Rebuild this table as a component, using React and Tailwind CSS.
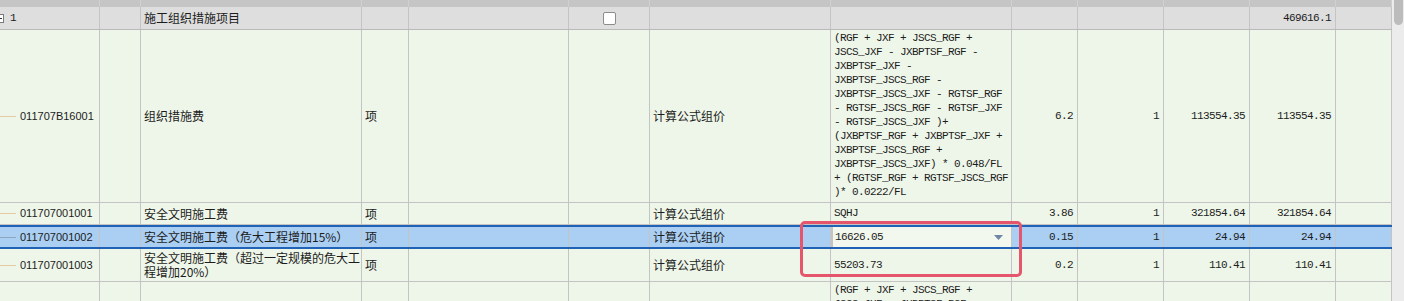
import React from 'react';

// column widths, left to right (grid lines at 100, 141, 362, 409, 569, 650, 831, 1012, 1078, 1164, 1250, 1336)
const colW = [
  'w-[100px]', 'w-[41px]', 'w-[221px]', 'w-[47px]', 'w-[160px]', 'w-[81px]', 'w-[181px]',
  'w-[181px]', 'w-[66px]', 'w-[86px]', 'w-[86px]', 'w-[86px]', 'w-[56px]',
];

const cjk = "font-['Noto_Sans_CJK_SC',sans-serif] text-[12px]";
const mono = "font-['Liberation_Mono',monospace] text-[11px] tracking-[-0.6px]";
const sans = "font-['Liberation_Sans',sans-serif] text-[11px]";

const formulaMain = [
  '(RGF + JXF + JSCS_RGF +',
  'JSCS_JXF - JXBPTSF_RGF -',
  'JXBPTSF_JXF -',
  'JXBPTSF_JSCS_RGF -',
  'JXBPTSF_JSCS_JXF - RGTSF_RGF',
  '- RGTSF_JSCS_RGF - RGTSF_JXF',
  '- RGTSF_JSCS_JXF )+',
  '(JXBPTSF_RGF + JXBPTSF_JXF +',
  'JXBPTSF_JSCS_RGF +',
  'JXBPTSF_JSCS_JXF) * 0.048/FL',
  '+ (RGTSF_RGF + RGTSF_JSCS_RGF',
  ')* 0.0222/FL',
];

function Cell({ i, className = '', children }) {
  return (
    <div className={`shrink-0 flex overflow-hidden border-r border-[#c4c4c4] ${colW[i]} ${className}`}>
      {children}
    </div>
  );
}

function TreeCell({ code, selected }) {
  return (
    <Cell i={0} className="items-center">
      <span className={`w-[16px] h-px shrink-0 ${selected ? 'bg-[#8ea6c0]' : 'bg-[#e4cba2]'}`} />
      <span className={`ml-[4px] ${sans}`}>{code}</span>
    </Cell>
  );
}

function Num({ i, children }) {
  return (
    <Cell i={i} className="items-center justify-end pr-[4px]">
      <span className={mono}>{children}</span>
    </Cell>
  );
}

function Text({ i, children, className = '' }) {
  return (
    <Cell i={i} className={`items-center pl-[3px] ${className}`}>
      <span className={`${cjk} leading-[14px]`}>{children}</span>
    </Cell>
  );
}

function Formula({ lines }) {
  return (
    <Cell i={7} className="flex-col items-start pl-[3px] pt-[1px]">
      {lines.map((l, k) => (
        <div key={k} className={`${mono} leading-[14px] whitespace-pre`}>{l}</div>
      ))}
    </Cell>
  );
}

function ItemRow({ code, name, price, rate, total, formula, height, selected }) {
  return (
    <div
      className={`flex shrink-0 ${height} ${
        selected ? 'bg-[#aacff3] border-y-2 border-[#1f62b6]' : 'bg-[#eef6e9] border-b border-[#c4c4c4]'
      }`}
    >
      <TreeCell code={code} selected={selected} />
      <Cell i={1} />
      <Text i={2}>{name}</Text>
      <Text i={3} className="pl-[2px]">项</Text>
      <Cell i={4} />
      <Cell i={5} />
      <Text i={6}>计算公式组价</Text>
      {selected ? (
        <Cell i={7} className="items-center justify-between pl-[2px] pr-[8px] bg-[#f2f8ed] border-x-2 border-[#1f62b6]">
          <span className={mono}>{formula}</span>
          <svg width="9" height="5" viewBox="0 0 9 5">
            <polygon points="0,0 9,0 4.5,5" fill="#6f86a6" />
          </svg>
        </Cell>
      ) : (
        <Cell i={7} className="items-center pl-[3px]">
          <span className={mono}>{formula}</span>
        </Cell>
      )}
      <Num i={8}>{rate}</Num>
      <Num i={9}>1</Num>
      <Num i={10}>{price}</Num>
      <Num i={11}>{total}</Num>
      <Cell i={12} />
    </div>
  );
}

export default function App() {
  return (
    <div className="relative flex h-[301px] w-[1404px] overflow-hidden bg-[#eef6e9] text-[#1c1c1c]">
      <div className="flex-1 flex flex-col min-h-0">
        {/* tail of the header */}
        <div className="flex shrink-0 h-[7px] bg-[#c5c5c5]">
          {colW.map((w, k) => (
            <div key={k} className={`shrink-0 border-r border-[#d0d0d0] ${w}`} />
          ))}
        </div>

        {/* group row */}
        <div className="flex shrink-0 h-[23px] bg-[#dedede] border-b border-[#b9b9b9]">
          <Cell i={0} className="items-center">
            <span className="-ml-[5px] w-[9px] h-[9px] border border-[#7a7a7a] bg-white flex items-center justify-center">
              <span className="w-[5px] h-px bg-[#333]" />
            </span>
            <span className={`ml-[6px] ${mono}`}>1</span>
          </Cell>
          <Cell i={1} />
          <Text i={2}>施工组织措施项目</Text>
          <Cell i={3} />
          <Cell i={4} />
          <Cell i={5} className="items-center justify-center">
            <span className="w-[13px] h-[13px] rounded-[2px] border border-[#8c8c8c] bg-white" />
          </Cell>
          <Cell i={6} />
          <Cell i={7} />
          <Cell i={8} />
          <Cell i={9} />
          <Cell i={10} />
          <Num i={11}>469616.1</Num>
          <Cell i={12} />
        </div>

        {/* 011707B16001 */}
        <div className="flex shrink-0 h-[173px] bg-[#eef6e9] border-b border-[#c4c4c4]">
          <TreeCell code="011707B16001" />
          <Cell i={1} />
          <Text i={2}>组织措施费</Text>
          <Text i={3} className="pl-[2px]">项</Text>
          <Cell i={4} />
          <Cell i={5} />
          <Text i={6}>计算公式组价</Text>
          <Formula lines={formulaMain} />
          <Num i={8}>6.2</Num>
          <Num i={9}>1</Num>
          <Num i={10}>113554.35</Num>
          <Num i={11}>113554.35</Num>
          <Cell i={12} />
        </div>

        <ItemRow height="h-[22px]" code="011707001001" name="安全文明施工费" formula="SQHJ" rate="3.86" price="321854.64" total="321854.64" />
        <ItemRow height="h-[24px]" selected code="011707001002" name="安全文明施工费（危大工程增加15%）" formula="16626.05" rate="0.15" price="24.94" total="24.94" />
        <ItemRow
          height="h-[33px]"
          code="011707001003"
          name={<>安全文明施工费（超过一定规模的危大工<br />程增加20%）</>}
          formula="55203.73"
          rate="0.2"
          price="110.41"
          total="110.41"
        />

        {/* next item, cut off */}
        <div className="flex flex-1 min-h-0 bg-[#eef6e9]">
          <Cell i={0} />
          <Cell i={1} />
          <Cell i={2} />
          <Cell i={3} />
          <Cell i={4} />
          <Cell i={5} />
          <Cell i={6} />
          <Formula lines={formulaMain.slice(0, 2)} />
          <Cell i={8} />
          <Cell i={9} />
          <Cell i={10} />
          <Cell i={11} />
          <Cell i={12} />
        </div>
      </div>

      {/* vertical scrollbar */}
      <div className="w-[12px] shrink-0 bg-[#ececec] flex justify-center">
        <div className="w-[9px] h-[25px] rounded-b-full bg-[#bcbcbc]" />
      </div>

      {/* red annotation box over the edited cell */}
      <div className="absolute left-[800px] top-[221px] w-[222px] h-[56px] rounded-[5px] border-[3px] border-[#e5566c]" />
    </div>
  );
}
